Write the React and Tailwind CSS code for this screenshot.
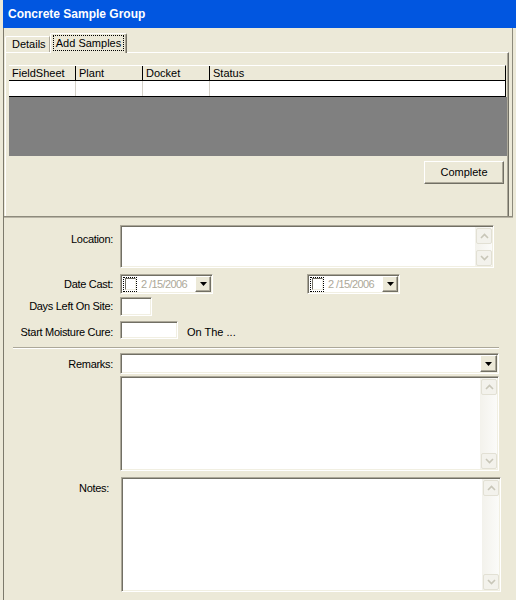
import React from "react";

const sunken =
  "border border-t-[#aca899] border-l-[#aca899] border-r-white border-b-white shadow-[inset_1px_1px_0_#716f64,inset_-1px_-1px_0_#f1efe2] bg-white";
const raised =
  "border border-t-white border-l-white border-r-[#716f64] border-b-[#716f64] shadow-[inset_-1px_-1px_0_#aca899] bg-[#ece9d8]";

function Triangle() {
  return (
    <svg width="7" height="4" viewBox="0 0 7 4">
      <polygon points="0,0 7,0 3.5,4" fill="#000" />
    </svg>
  );
}

function ScrollBtn({ dir }) {
  return (
    <div className="w-[16px] h-[16px] rounded-[2px] border border-[#e2e0d4] bg-[#f3f2ec] flex items-center justify-center">
      <svg width="9" height="6" viewBox="0 0 9 6">
        <polyline
          points={dir === "up" ? "1,5 4.5,1.5 8,5" : "1,1 4.5,4.5 8,1"}
          fill="none"
          stroke="#c8c6b8"
          strokeWidth="1.6"
        />
      </svg>
    </div>
  );
}

function ScrollBar() {
  return (
    <div className="w-[17px] h-full bg-gradient-to-r from-[#f3f2ec] to-[#fbfbf9] flex flex-col justify-between pt-[1px] pl-[1px]">
      <ScrollBtn dir="up" />
      <ScrollBtn dir="down" />
    </div>
  );
}

function TextBox({ className }) {
  return (
    <div className={`${sunken} ${className} flex justify-end p-[1px]`}>
      <ScrollBar />
    </div>
  );
}

function DatePicker() {
  return (
    <div className={`${sunken} w-[93px] h-[20px] flex items-center p-[1px]`}>
      <div className="ml-[1px] w-[14px] h-[15px] border border-dotted border-black flex items-center justify-center">
        <div className="w-[11px] h-[12px] border border-t-[#716f64] border-l-[#716f64] border-r-[#f1efe2] border-b-[#f1efe2] bg-white" />
      </div>
      <span className="ml-[4px] text-[11px] tracking-[-0.6px] text-[#aca899] leading-none">2 /15/2006</span>
      <div className={`${raised} ml-auto w-[16px] h-full flex items-center justify-center`}>
        <Triangle />
      </div>
    </div>
  );
}

function Label({ children, className = "" }) {
  return (
    <div className={`w-[109px] shrink-0 text-right leading-[13px] tracking-[-0.3px] ${className}`}>{children}</div>
  );
}

export default function App() {
  const cols = ["FieldSheet", "Plant", "Docket"];

  return (
    <div
      className="w-[516px] h-[600px] bg-[#ece9d8] flex flex-col overflow-hidden text-[11px] text-black"
      style={{ fontFamily: '"Liberation Sans", Arial, sans-serif' }}
    >
      {/* title */}
      <div className="ml-[3px] h-[28px] shrink-0 bg-[#0156e0] flex items-center pl-[5px]">
        <span className="text-white font-bold text-[12px]">Concrete Sample Group</span>
      </div>

      <div className="ml-[3px] flex-1 border-l border-[#7d7a6c] flex flex-col">
        {/* top panel with tabs */}
        <div className="w-[509px] h-[189px] shrink-0 border-r border-b border-[#8d8a7c] shadow-[0_1px_0_#b9b5a6] pl-[1px] pt-[5px] flex flex-col">
          <div className="flex items-end h-[19px]">
            <div className="w-[45px] h-[16px] border-t border-l border-white border-r border-r-[#aca899] rounded-tl-[2px] pl-[6px] flex items-center">
              Details
            </div>
            <div className="relative z-10 -mb-[1px] w-[77px] h-[20px] bg-[#ece9d8] border-t border-l border-white border-r border-r-[#716f64] shadow-[inset_-1px_0_0_#aca899] rounded-t-[2px] pl-[2px] pt-[1px]">
              <div className="w-[71px] h-[16px] border border-dotted border-black flex items-center justify-center">
                Add Samples
              </div>
            </div>
          </div>

          <div className="w-[504px] flex-1 border-t border-l border-white border-r border-r-[#716f64] shadow-[inset_-1px_0_0_#aca899] pt-[12px] pl-[3px]">
            <div className="w-[498px]">
              <div className="w-[497px] h-[16px] flex border-t border-white border-b border-b-black border-r border-r-black bg-[#ece9d8]">
                {cols.map((c) => (
                  <div key={c} className="w-[67px] border-r border-black pl-[3px] leading-[14px]">
                    {c}
                  </div>
                ))}
                <div className="flex-1 pl-[3px] leading-[14px]">Status</div>
              </div>
              <div className="w-[497px] h-[16px] flex bg-white border-b border-black border-r border-r-black">
                {cols.map((c) => (
                  <div key={c} className="w-[67px] border-r border-[#d4d0c8]" />
                ))}
                <div className="flex-1" />
              </div>
              <div className="w-[498px] h-[59px] bg-[#808080]" />
            </div>
            <div className="w-[497px] mt-[5px] flex justify-end pr-[2px]">
              <div className={`${raised} w-[80px] h-[23px] flex items-center justify-center`}>Complete</div>
            </div>
          </div>
        </div>

        {/* lower form */}
        <div className="flex flex-col pt-[8px]">
          <div className="flex">
            <Label className="pt-[8px]">Location:</Label>
            <TextBox className="ml-[7px] w-[374px] h-[43px]" />
          </div>

          <div className="flex items-center mt-[6px]">
            <Label>Date Cast:</Label>
            <div className="ml-[7px]">
              <DatePicker />
            </div>
            <div className="ml-[94px]">
              <DatePicker />
            </div>
          </div>

          <div className="flex items-center mt-[3px]">
            <Label>Days Left On Site:</Label>
            <div className={`${sunken} ml-[7px] w-[32px] h-[19px]`} />
          </div>

          <div className="flex items-start mt-[5px]">
            <Label className="pt-[5px]">Start Moisture Cure:</Label>
            <div className={`${sunken} ml-[7px] w-[58px] h-[18px]`} />
            <span className="ml-[9px] pt-[5px] leading-[13px]">On The ...</span>
          </div>

          <div className="ml-[9px] mt-[8px] w-[486px] h-[2px] border-t border-[#aca899] border-b border-b-white" />

          <div className="flex items-start mt-[4px]">
            <Label className="pt-[5px]">Remarks:</Label>
            <div className={`${sunken} ml-[7px] w-[379px] h-[21px] flex justify-end p-[1px]`}>
              <div className={`${raised} w-[17px] h-full flex items-center justify-center`}>
                <Triangle />
              </div>
            </div>
          </div>

          <div className="flex mt-[2px]">
            <Label />
            <TextBox className="ml-[7px] w-[379px] h-[95px]" />
          </div>

          <div className="flex mt-[6px]">
            <Label className="pt-[5px] pr-[4px]">Notes:</Label>
            <TextBox className="ml-[8px] w-[380px] h-[115px]" />
          </div>
        </div>
      </div>
    </div>
  );
}
